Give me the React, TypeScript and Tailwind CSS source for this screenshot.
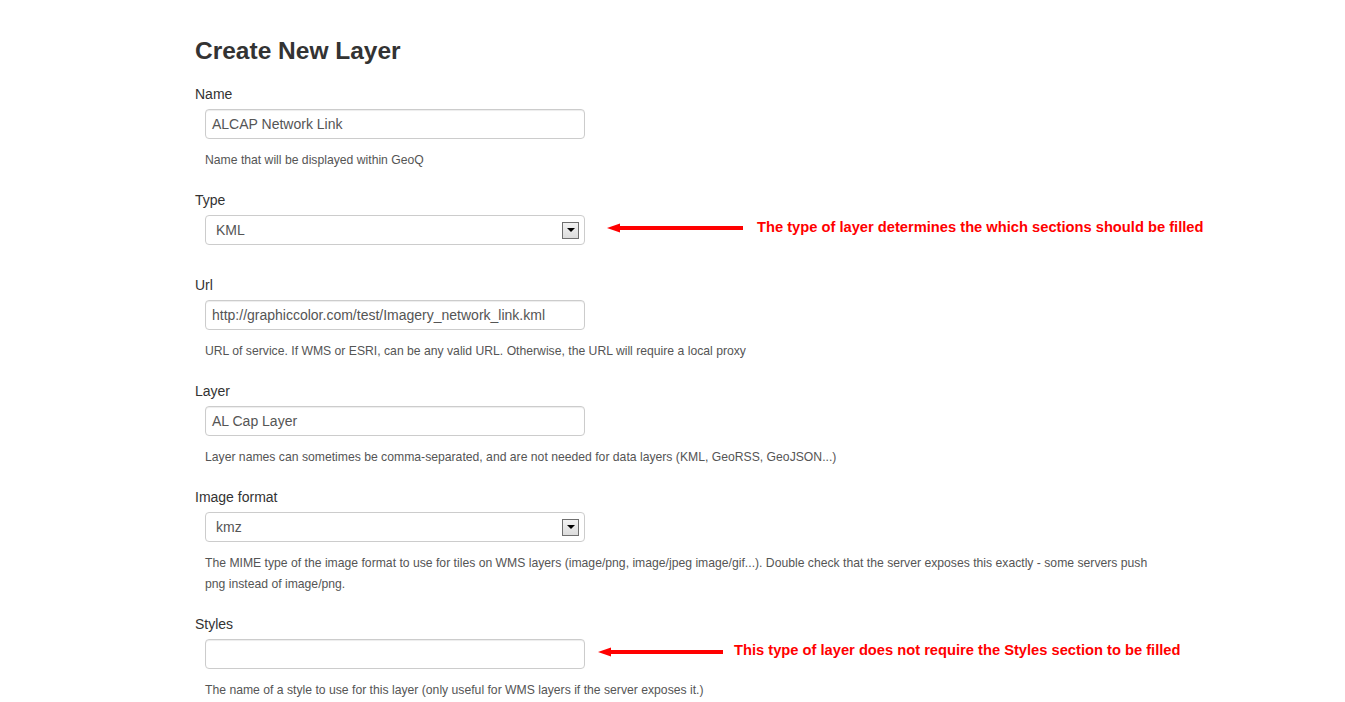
import React from 'react';

const font = { fontFamily: '"Liberation Sans", Arial, Helvetica, sans-serif' };

const Arrow = ({ width }: { width: number }) => (
    <svg width={width} height="10" viewBox={`0 0 ${width} 10`} className="block shrink-0">
        <polygon points="0,5 13,0.5 13,9.5" fill="#ff0000" />
        <rect x="10" y="3" width={width - 10} height="4" fill="#ff0000" />
    </svg>
);

const Note = ({ text, gap, arrow, textGap, lift }: { text: string; gap: number; arrow: number; textGap: number; lift: number }) => (
    <div className="flex items-center mb-[4px] shrink-0" style={{ marginLeft: gap }}>
        <Arrow width={arrow} />
        <span
            className="text-[14.7px] font-bold text-[#ff0000] whitespace-nowrap leading-4"
            style={{ marginLeft: textGap, marginTop: -lift }}
        >
            {text}
        </span>
    </div>
);

const TextInput = ({ value }: { value: string }) => (
    <div className="w-[380px] shrink-0 h-[30px] border border-[#cccccc] rounded-[4px] bg-white px-[6px] flex items-center text-sm text-[#555555] shadow-[inset_0_1px_1px_rgba(0,0,0,0.075)]">
        {value}
    </div>
);

const SelectBox = ({ value }: { value: string }) => (
    <div className="w-[380px] shrink-0 h-[30px] border border-[#cccccc] rounded-[4px] bg-white pl-[10px] pr-[5px] flex items-center justify-between text-sm text-[#555555]">
        <span>{value}</span>
        <div className="w-[17px] h-[17px] border border-[#6f6f6f] bg-gradient-to-b from-[#f2f2f2] to-[#dcdcdc] flex items-center justify-center">
            <div className="w-0 h-0 border-l-[4px] border-r-[4px] border-t-[4px] border-l-transparent border-r-transparent border-t-black" />
        </div>
    </div>
);

const Field = ({ label, children, help, note, last }: { label: string; children: React.ReactNode; help?: string; note?: React.ReactNode; last?: boolean }) => (
    <div className={help ? (last ? '' : 'mb-[19px]') : 'mb-[30px]'}>
        <div className="text-sm leading-5 text-[#333333]">{label}</div>
        <div className="mt-[5px] pl-[10px] flex items-center">
            {children}
            {note}
        </div>
        {help && (
            <div className="mt-[11px] pl-[10px] text-[12.2px] leading-[21px] text-[#555555] w-[955px]">{help}</div>
        )}
    </div>
);

export default function App() {
    return (
        <div className="min-h-screen bg-white" style={font}>
            <div className="pl-[195px] pt-[36px] w-[1250px]">
                <h1 className="text-[24.5px] leading-[30px] font-bold text-[#333333] mb-[18px]">Create New Layer</h1>

                <Field label="Name" help="Name that will be displayed within GeoQ">
                    <TextInput value="ALCAP Network Link" />
                </Field>

                <Field
                    label="Type"
                    note={<Note text="The type of layer determines the which sections should be filled" gap={22} arrow={136} textGap={14} lift={3} />}
                >
                    <SelectBox value="KML" />
                </Field>

                <Field label="Url" help="URL of service. If WMS or ESRI, can be any valid URL. Otherwise, the URL will require a local proxy">
                    <TextInput value="http://graphiccolor.com/test/Imagery_network_link.kml" />
                </Field>

                <Field label="Layer" help="Layer names can sometimes be comma-separated, and are not needed for data layers (KML, GeoRSS, GeoJSON...)">
                    <TextInput value="AL Cap Layer" />
                </Field>

                <Field
                    label="Image format"
                    help="The MIME type of the image format to use for tiles on WMS layers (image/png, image/jpeg image/gif...). Double check that the server exposes this exactly - some servers push png instead of image/png."
                >
                    <SelectBox value="kmz" />
                </Field>

                <Field
                    label="Styles"
                    help="The name of a style to use for this layer (only useful for WMS layers if the server exposes it.)"
                    note={<Note text="This type of layer does not require the Styles section to be filled" gap={13} arrow={125} textGap={11} lift={5} />}
                    last
                >
                    <TextInput value="" />
                </Field>
            </div>
        </div>
    );
}
